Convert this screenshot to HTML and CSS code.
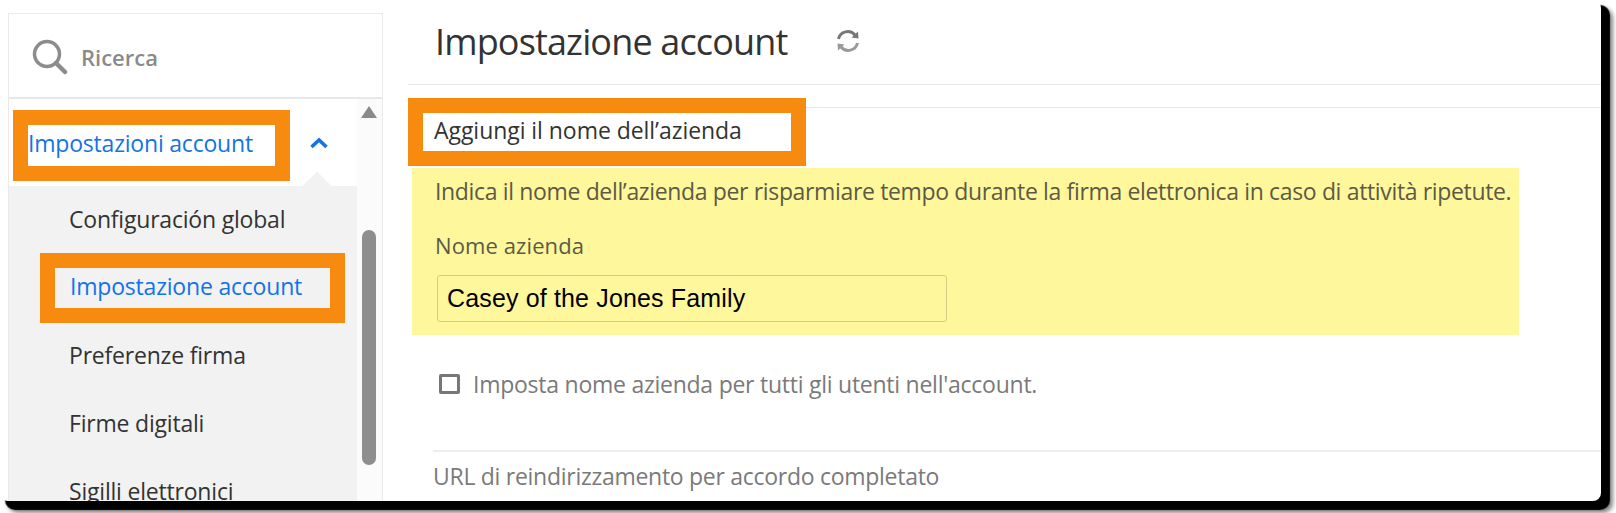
FILE: index.html
```html
<!DOCTYPE html>
<html lang="it">
<head>
    <meta charset="UTF-8">
    <title>Impostazione account</title>
    <link rel="stylesheet" href="styles.css">
</head>
<body>
    <div class="frame">
        <aside class="sidebar">
            <div class="search">
                <svg class="search-icon" width="36" height="36" viewBox="0 0 36 36">
                    <circle cx="15" cy="15" r="12.5" fill="none" stroke="#8c8c8c" stroke-width="3.5"/>
                    <path d="M24 24 L33 33" stroke="#8c8c8c" stroke-width="4.5" stroke-linecap="round"/>
                </svg>
                <span>Ricerca</span>
            </div>
            <div class="nav">
                <div class="menu">
                    <div class="menu-head">
                        <a class="head-link" href="#">Impostazioni account</a>
                        <svg class="chevron" width="20" height="12" viewBox="0 0 20 12">
                            <path d="M2.5 10 L10 3 L17.5 10" fill="none" stroke="#1473e6" stroke-width="3.6"/>
                        </svg>
                        <span class="notch"></span>
                    </div>
                    <ul class="submenu">
                        <li class="first">Configuración global</li>
                        <li class="active"><a href="#">Impostazione account</a></li>
                        <li>Preferenze firma</li>
                        <li>Firme digitali</li>
                        <li>Sigilli elettronici</li>
                    </ul>
                </div>
                <div class="scrollbar">
                    <span class="arrow"></span>
                    <span class="thumb"></span>
                </div>
            </div>
        </aside>

        <main class="content">
            <header class="title-row">
                <h1>Impostazione account</h1>
                <svg class="refresh" width="26" height="26" viewBox="0 0 26 26">
                    <path d="M3.5 11 A9.5 9.5 0 0 1 20 7" fill="none" stroke="#777" stroke-width="3"/>
                    <path d="M22.5 15 A9.5 9.5 0 0 1 6 19" fill="none" stroke="#999" stroke-width="3"/>
                    <path d="M16.5 9.5 L23.5 10.5 L23 3.5 Z" fill="#777"/>
                    <path d="M9.5 16.5 L2.5 15.5 L3 22.5 Z" fill="#999"/>
                </svg>
            </header>
            <div class="strip"></div>
            <h2 class="section-title"><span>Aggiungi il nome dell’azienda</span></h2>
            <section class="highlighted">
                <p class="hint">Indica il nome dell’azienda per risparmiare tempo durante la firma elettronica in caso di attività ripetute.</p>
                <label class="field-label" for="company">Nome azienda</label>
                <input class="field" id="company" type="text" value="Casey of the Jones Family">
            </section>
            <div class="check-row">
                <span class="checkbox"></span>
                <span>Imposta nome azienda per tutti gli utenti nell'account.</span>
            </div>
            <div class="next-section">URL di reindirizzamento per accordo completato</div>
        </main>
    </div>
</body>
</html>
```

FILE: styles.css
```css
html, body {
    margin: 0;
    height: 513px;
    overflow: hidden;
    background-color: white;
}

body {
    font-family: "Open Sans", Arial, sans-serif;
    color: #333;
}

.frame {
    display: flex;
    width: 1601px;
    height: 501px;
    overflow: hidden;
    background-color: white;
    border-radius: 8px;
    box-shadow: 7px 7px 1px 2px #000, 10px 10px 4px 2px #888;
}

/* Barra laterale */
.sidebar {
    width: 375px;
    margin: 13px 0 0 8px;
    flex-shrink: 0;
    border: 1px solid #eaeaea;
    border-bottom: none;
    box-sizing: border-box;
}

.search {
    display: flex;
    align-items: center;
    gap: 13px;
    height: 85px;
    padding: 3px 0 0 23px;
    border-bottom: 2px solid #e8e8e8;
    box-sizing: border-box;
    font-size: 22px;
    font-weight: 600;
    color: #8a8a8a;
}

.nav {
    display: flex;
    height: 404px;
}

.menu {
    width: 348px;
    flex-shrink: 0;
    overflow: hidden;
}

.menu-head {
    position: relative;
    display: flex;
    align-items: flex-start;
    height: 87px;
    padding: 11px 0 0 4px;
    box-sizing: border-box;
}

.head-link {
    width: 247px;
    height: 41px;
    line-height: 37px;
    border: 15px solid #f68b10;
    font-size: 23px;
    color: #1473e6;
    text-decoration: none;
    letter-spacing: -0.2px;
    white-space: nowrap;
}

.chevron {
    margin: 27px 0 0 19px;
}

.notch {
    position: absolute;
    left: 297px;
    bottom: -12px;
    width: 22px;
    height: 22px;
    background-color: #f2f2f2;
    transform: rotate(45deg);
}

.submenu {
    position: relative;
    list-style: none;
    margin: 0;
    padding: 0;
    height: 320px;
    background-color: #f2f2f2;
    font-size: 23px;
    letter-spacing: -0.2px;
    white-space: nowrap;
}

.submenu li {
    display: flex;
    align-items: center;
    height: 68px;
    padding: 0 0 4px 60px;
    box-sizing: border-box;
}

.submenu .first {
    height: 67px;
    padding-bottom: 2px;
}

.submenu .active {
    height: 70px;
    padding: 0 0 0 31px;
}

.submenu .active a {
    width: 260px;
    height: 40px;
    line-height: 36px;
    padding-left: 15px;
    border: 15px solid #f68b10;
    color: #1473e6;
    text-decoration: none;
}

.scrollbar {
    position: relative;
    flex: 1;
    background-color: #fbfbfb;
}

.arrow {
    position: absolute;
    left: 4px;
    top: 7px;
    border-left: 8px solid transparent;
    border-right: 8px solid transparent;
    border-bottom: 12px solid #8a8a8a;
}

.thumb {
    position: absolute;
    left: 5px;
    top: 131px;
    width: 14px;
    height: 235px;
    border-radius: 7px;
    background-color: #8e8e8e;
}

/* Contenuto */
.content {
    flex: 1;
    min-width: 0;
    padding-left: 25px;
    white-space: nowrap;
}

.title-row {
    display: flex;
    align-items: center;
    height: 84px;
    padding-left: 27px;
    box-sizing: content-box;
    border-bottom: 1px solid #e8e8e8;
}

.title-row h1 {
    margin: 0;
    font-size: 36px;
    font-weight: 400;
    letter-spacing: -0.85px;
    color: #333;
    position: relative;
    top: -1px;
}

.refresh {
    margin-left: 48px;
    position: relative;
    top: -1px;
}

.strip {
    height: 22px;
    border-bottom: 1px solid #e8e8e8;
}

.section-title {
    position: relative;
    width: 368px;
    height: 38px;
    margin: -10px 0 0;
    border: 15px solid #f68b10;
    background-color: white;
    font-size: 23px;
    font-weight: 400;
    line-height: 34px;
    letter-spacing: -0.05px;
    color: #333;
}

.section-title span {
    margin-left: 11px;
}

.highlighted {
    width: 1107px;
    height: 167px;
    margin: 2px 0 0 4px;
    padding: 2px 0 0 23px;
    box-sizing: border-box;
    background-color: #fff79c;
    color: #5c5a45;
}

.hint {
    margin: 0;
    font-size: 23px;
    line-height: 42px;
    letter-spacing: -0.35px;
}

.field-label {
    display: block;
    margin-top: 18px;
    font-size: 22px;
    line-height: 30px;
    letter-spacing: 0.1px;
}

.field {
    display: block;
    width: 510px;
    height: 47px;
    margin: 15px 0 0 2px;
    padding: 0 0 0 9px;
    box-sizing: border-box;
    border: 1px solid #d3cd85;
    border-radius: 3px;
    background: transparent;
    font-family: "Liberation Sans", Arial, sans-serif;
    font-size: 25px;
    letter-spacing: 0.15px;
    color: black;
}

.check-row {
    display: flex;
    align-items: center;
    gap: 13px;
    height: 30px;
    margin: 34px 0 0 31px;
    font-size: 23px;
    letter-spacing: -0.25px;
    color: #7a7a7a;
}

.checkbox {
    width: 15px;
    height: 14px;
    border: 3px solid #777;
    border-radius: 2px;
}

.next-section {
    height: 50px;
    line-height: 48px;
    margin: 51px 0 0 25px;
    border-top: 2px solid #eeeeee;
    font-size: 23px;
    letter-spacing: -0.28px;
    color: #7a7a7a;
}
```
